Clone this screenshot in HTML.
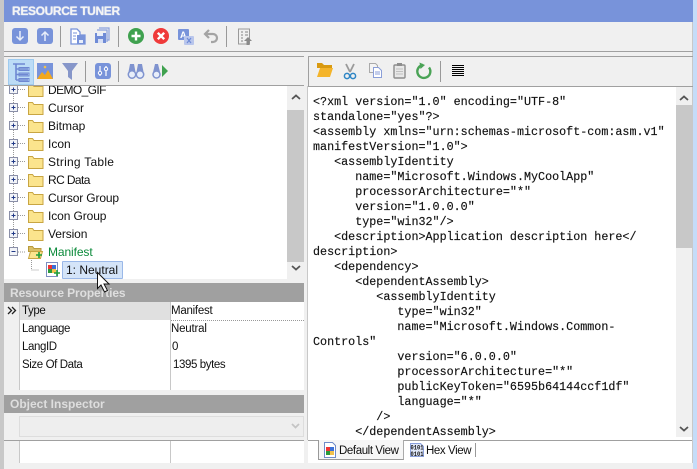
<!DOCTYPE html>
<html><head><meta charset="utf-8">
<style>
html,body{margin:0;padding:0}
body{width:697px;height:469px;overflow:hidden;position:relative;background:#f0f0f0;font-family:"Liberation Sans",sans-serif;font-size:12px;color:#111}
.a{position:absolute}
.t{position:absolute;white-space:pre;line-height:18px;font-size:12px}
.s{font-size:11.5px;letter-spacing:-.4px}
svg{position:absolute;overflow:visible}
.code{position:absolute;left:313px;top:95px;font:11.72px/15px "Liberation Mono",monospace;white-space:pre;color:#111;-webkit-text-stroke:.15px #111}
.hd{position:absolute;left:4px;width:300px;background:#a0a0a0;color:#dedede;font-weight:bold;font-size:12px;line-height:18px;text-indent:6px}
</style></head><body>
<div class="a" style="left:0;top:0;width:4px;height:469px;background:#c8c8c8"></div>
<div class="a" style="left:693px;top:0;width:4px;height:469px;background:#c5dcf8"></div>
<div class="a" style="left:692px;top:22px;width:1px;height:441px;background:#c8c8c8"></div>
<div class="a" style="left:4px;top:0;width:689px;height:22px;background:#7893da"></div>
<div class="t" style="left:12px;top:2px;color:#f4f4f4;font-weight:bold;font-size:12px;letter-spacing:-.35px;text-shadow:0 0 1px #fff">RESOURCE TUNER</div>

<div class="a" style="left:4px;top:51px;width:689px;height:1px;background:#a0a0a0"></div>
<div class="a" style="left:4px;top:56px;width:300px;height:1px;background:#a0a0a0"></div>
<div class="a" style="left:308px;top:56px;width:385px;height:1px;background:#a0a0a0"></div>
<div class="a" style="left:308px;top:56px;width:1px;height:30px;background:#a0a0a0"></div>
<div class="a" style="left:4px;top:85px;width:300px;height:1px;background:#a0a0a0"></div>
<div class="a" style="left:308px;top:86px;width:385px;height:1px;background:#a0a0a0"></div>
<div class="a" style="left:307px;top:86px;width:1px;height:354px;background:#c8c8c8"></div>

<!-- separators -->
<div class="a" style="left:60px;top:26px;width:1px;height:21px;background:#999"></div>
<div class="a" style="left:118px;top:26px;width:1px;height:21px;background:#999"></div>
<div class="a" style="left:226px;top:26px;width:1px;height:21px;background:#999"></div>
<div class="a" style="left:85px;top:61px;width:1px;height:21px;background:#999"></div>
<div class="a" style="left:118px;top:61px;width:1px;height:21px;background:#999"></div>
<div class="a" style="left:440px;top:61px;width:1px;height:21px;background:#999"></div>

<!-- top toolbar icons -->
<svg style="left:0;top:0" width="300" height="56">
<rect x="12" y="28" width="16" height="16" rx="3" fill="#7893da"/>
<path d="M20 31v9M16.500 36.500l3.500 3.500 3.500-3.500" stroke="#e8eefa" stroke-width="1.500" fill="none"/>
<rect x="37" y="28" width="16" height="16" rx="3" fill="#7893da"/>
<path d="M45 41v-9M41.500 35.500l3.500-3.500 3.500 3.500" stroke="#e8eefa" stroke-width="1.500" fill="none"/>
<path d="M71 29h6l3 3v3h5v9H71z" fill="#fff" stroke="#7893da" stroke-width="1.300"/>
<rect x="77" y="35" width="8" height="9" fill="#7893da"/>
<rect x="79" y="40" width="4" height="3" fill="#e8eefa"/>
<path d="M73 33h4M73 36h3M73 39h3" stroke="#7893da"/>
<path d="M99 28h10v12h-2" fill="none" stroke="#8aa0dc" stroke-width="1.200"/>
<path d="M97 30h10v12" fill="none" stroke="#8aa0dc" stroke-width="1.200"/>
<rect x="95" y="33" width="11" height="10" fill="#6f8bd6"/>
<rect x="97" y="33" width="6" height="3" fill="#e8eefa"/>
<rect x="98" y="39" width="5" height="4" fill="#d8e0f5"/>
<circle cx="136" cy="36" r="8" fill="#3fa14f"/>
<path d="M136 31.500v9M131.500 36h9" stroke="#fff" stroke-width="2.400"/>
<circle cx="161" cy="36" r="8" fill="#ef3a3a"/>
<path d="M157.800 32.800l6.400 6.400M164.200 32.800l-6.400 6.400" stroke="#fff" stroke-width="2.400"/>
<rect x="178" y="29" width="11" height="11" rx="1" fill="#7893da"/>
<text x="180" y="38" font-size="9" font-weight="bold" fill="#fff" font-family="Liberation Sans">A</text>
<rect x="184" y="36" width="10" height="9" rx="1" fill="#b9c6ec"/>
<path d="M187 38l4 5M191 38l-4 5" stroke="#6f8bd6" stroke-width="1.200"/>
<path d="M209 30l-4 4 4 4M205 34h8a4 4 0 0 1 4 4v0a4 4 0 0 1-4 4h-2" fill="none" stroke="#a4a4a4" stroke-width="2.200"/>
<rect x="238.500" y="29" width="11" height="15" fill="#f0f0f0" stroke="#9a9a9a"/>
<path d="M241 32h2M241 35h2M241 38h2M241 41h2M245 32h3M245 35h3" stroke="#999" stroke-width="1.200"/>
<path d="M248 37l4 4h-2.500v4h-3v-4H244z" fill="#8a8a8a"/>
</svg>

<!-- left toolbar icons -->
<div class="a" style="left:8px;top:59px;width:24px;height:24px;background:#bcdcf6;border:1px solid #9ecbef"></div>
<svg style="left:0;top:0" width="300" height="90">
<path d="M13 64h12M16 64v16M16 69h12M16 74.500h12M16 80h12" stroke="#6e88d2" stroke-width="1.600" fill="none"/>
<rect x="19" y="67.500" width="10" height="3" fill="none" stroke="#6e88d2"/>
<rect x="19" y="73" width="10" height="3" fill="none" stroke="#6e88d2"/>
<rect x="19" y="78.500" width="10" height="3" fill="none" stroke="#6e88d2"/>
<rect x="37" y="63" width="16" height="16" fill="#7893da"/>
<path d="M37 79l5-7 3 3 3-5 5 9z" fill="#f2a81d"/>
<circle cx="45" cy="67" r="1.300" fill="#f2c14d"/>
<path d="M62 63h16l-6 8v9l-4-3v-6z" fill="#8696c9"/>
<rect x="95" y="63" width="16" height="16" rx="3" fill="#7893da"/>
<path d="M100 66v10M106 66v10" stroke="#fff" stroke-width="1.200"/>
<circle cx="100" cy="73" r="1.700" fill="#7893da" stroke="#fff"/>
<circle cx="106" cy="69" r="1.700" fill="#7893da" stroke="#fff"/>
<path d="M130 64h4l1.500 8v2.500a3.800 3.800 0 0 1-7.500 0z" fill="#7f93cf"/>
<path d="M138 64h4l2 10.500a3.800 3.800 0 0 1-7.500 0V72z" fill="#7f93cf"/>
<circle cx="132" cy="74.500" r="3.700" fill="#e8eefa" stroke="#7f93cf" stroke-width="1.500"/>
<circle cx="140" cy="74.500" r="3.700" fill="#e8eefa" stroke="#7f93cf" stroke-width="1.500"/>
<path d="M155 64h3l2 8v2.500a3.800 3.800 0 0 1-7.500 0z" fill="#7f93cf"/>
<circle cx="156.500" cy="74.500" r="3.500" fill="#e8eefa" stroke="#7f93cf" stroke-width="1.500"/>
<path d="M162 65l6 6-6 6z" fill="#3fa14f"/>
</svg>

<!-- right toolbar icons -->
<svg style="left:0;top:0" width="697" height="90">
<path d="M317 63h5l2 2h8v3h-15z" fill="#d99a10"/>
<path d="M317 77l3-9h13l-3 9z" fill="#f4b42a"/>
<path d="M346 64l4 8M354 64l-4 8" stroke="#9a9a9a" stroke-width="1.800"/>
<circle cx="347" cy="76" r="2.600" fill="none" stroke="#2f86c5" stroke-width="1.500"/>
<circle cx="353" cy="76" r="2.600" fill="none" stroke="#2f86c5" stroke-width="1.500"/>
<path d="M369.500 63.500h6l2 2v7h-8z" fill="#f4f4f4" stroke="#aaa"/>
<path d="M373.500 67.500h5l3 3v7h-8z" fill="#fff" stroke="#8a9ed8"/>
<path d="M375 72h5M375 74h5" stroke="#8a9ed8"/>
<rect x="394" y="65" width="11" height="13" rx="1" fill="#e8e8e8" stroke="#8d8d8d" stroke-width="1.400"/>
<rect x="397" y="63" width="5" height="3" fill="#8d8d8d"/>
<path d="M396 69h7M396 71.500h7M396 74h7" stroke="#c0c0c0"/>
<path d="M423 65a6.500 6.500 0 1 0 6 2.500" fill="none" stroke="#4aa356" stroke-width="2.400"/>
<path d="M419.500 62.500l5.500 2.500-4.500 4z" fill="#4aa356"/>
<path d="M452 65.500h12M452 67.500h12M452 69.500h12M452 71.500h12M452 73.500h12M452 75.500h12" stroke="#000" stroke-width="1"/>
</svg>

<!-- Tree -->
<div class="a" style="left:4px;top:86px;width:300px;height:193px;background:#fff;overflow:hidden" id="tree">
<div class="a" style="left:283px;top:0;width:17px;height:193px;background:#f0f0f0"></div>
<div class="a" style="left:283px;top:24px;width:17px;height:152px;background:#c8c8c8"></div>
<svg style="left:0;top:0" width="300" height="193">
<path d="M9.500 4v158M9.500 166v4" stroke="#999" stroke-dasharray="1 1" fill="none"/>
<path d="M14 166h8M27.500 170v14h8" stroke="#999" stroke-dasharray="1 1" fill="none"/>
<path d="M288 13l4-3.500 4 3.500M288 180l4 3.500 4-3.500" stroke="#555" stroke-width="1.800" fill="none"/>
<g id="rows">
<g transform="translate(0,4)"><rect x="5.500" y="-4.500" width="8" height="8" fill="#f2f4f8" stroke="#8a8fa8"/><path d="M7.500-.5h4M9.500-2.500v4" stroke="#223a88"/><path d="M14-.5h8" stroke="#999" stroke-dasharray="1 1"/><path d="M24.500-5.500h4l1.500 2h9v10h-14.500z" fill="#fbe48d" stroke="#c8a542"/></g>
<g transform="translate(0,22)"><rect x="5.500" y="-4.500" width="8" height="8" fill="#f2f4f8" stroke="#8a8fa8"/><path d="M7.500-.5h4M9.500-2.500v4" stroke="#223a88"/><path d="M14-.5h8" stroke="#999" stroke-dasharray="1 1"/><path d="M24.500-5.500h4l1.500 2h9v10h-14.500z" fill="#fbe48d" stroke="#c8a542"/></g>
<g transform="translate(0,40)"><rect x="5.500" y="-4.500" width="8" height="8" fill="#f2f4f8" stroke="#8a8fa8"/><path d="M7.500-.5h4M9.500-2.500v4" stroke="#223a88"/><path d="M14-.5h8" stroke="#999" stroke-dasharray="1 1"/><path d="M24.500-5.500h4l1.500 2h9v10h-14.500z" fill="#fbe48d" stroke="#c8a542"/></g>
<g transform="translate(0,58)"><rect x="5.500" y="-4.500" width="8" height="8" fill="#f2f4f8" stroke="#8a8fa8"/><path d="M7.500-.5h4M9.500-2.500v4" stroke="#223a88"/><path d="M14-.5h8" stroke="#999" stroke-dasharray="1 1"/><path d="M24.500-5.500h4l1.500 2h9v10h-14.500z" fill="#fbe48d" stroke="#c8a542"/></g>
<g transform="translate(0,76)"><rect x="5.500" y="-4.500" width="8" height="8" fill="#f2f4f8" stroke="#8a8fa8"/><path d="M7.500-.5h4M9.500-2.500v4" stroke="#223a88"/><path d="M14-.5h8" stroke="#999" stroke-dasharray="1 1"/><path d="M24.500-5.500h4l1.500 2h9v10h-14.500z" fill="#fbe48d" stroke="#c8a542"/></g>
<g transform="translate(0,94)"><rect x="5.500" y="-4.500" width="8" height="8" fill="#f2f4f8" stroke="#8a8fa8"/><path d="M7.500-.5h4M9.500-2.500v4" stroke="#223a88"/><path d="M14-.5h8" stroke="#999" stroke-dasharray="1 1"/><path d="M24.500-5.500h4l1.500 2h9v10h-14.500z" fill="#fbe48d" stroke="#c8a542"/></g>
<g transform="translate(0,112)"><rect x="5.500" y="-4.500" width="8" height="8" fill="#f2f4f8" stroke="#8a8fa8"/><path d="M7.500-.5h4M9.500-2.500v4" stroke="#223a88"/><path d="M14-.5h8" stroke="#999" stroke-dasharray="1 1"/><path d="M24.500-5.500h4l1.500 2h9v10h-14.500z" fill="#fbe48d" stroke="#c8a542"/></g>
<g transform="translate(0,130)"><rect x="5.500" y="-4.500" width="8" height="8" fill="#f2f4f8" stroke="#8a8fa8"/><path d="M7.500-.5h4M9.500-2.500v4" stroke="#223a88"/><path d="M14-.5h8" stroke="#999" stroke-dasharray="1 1"/><path d="M24.500-5.500h4l1.500 2h9v10h-14.500z" fill="#fbe48d" stroke="#c8a542"/></g>
<g transform="translate(0,148)"><rect x="5.500" y="-4.500" width="8" height="8" fill="#f2f4f8" stroke="#8a8fa8"/><path d="M7.500-.5h4M9.500-2.500v4" stroke="#223a88"/><path d="M14-.5h8" stroke="#999" stroke-dasharray="1 1"/><path d="M24.500-5.500h4l1.500 2h9v10h-14.500z" fill="#fbe48d" stroke="#c8a542"/></g>
</g>
<rect x="5.500" y="161.500" width="8" height="8" fill="#f2f4f8" stroke="#8a8fa8"/><path d="M7.500 165.500h4" stroke="#223a88"/>
<path d="M24.500 160.500h4l1.500 2h7v3h-12.500z" fill="#d9bf66" stroke="#b89a3c"/>
<path d="M24.500 172.500l2-7h12l-2 7z" fill="#fbe48d" stroke="#c8a542"/>
<path d="M32 169h6M35 166v6" stroke="#1f9e3a" stroke-width="1.600"/>
</svg>
<div class="t" style="left:44px;top:-5px;letter-spacing:-.6px">DEMO_GIF</div>
<div class="t" style="left:44px;top:13px">Cursor</div>
<div class="t" style="left:44px;top:31px">Bitmap</div>
<div class="t" style="left:44px;top:49px">Icon</div>
<div class="t" style="left:44px;top:67px;letter-spacing:.25px">String Table</div>
<div class="t" style="left:44px;top:85px;letter-spacing:-.6px">RC Data</div>
<div class="t" style="left:44px;top:103px;letter-spacing:-.15px">Cursor Group</div>
<div class="t" style="left:44px;top:121px;letter-spacing:-.1px">Icon Group</div>
<div class="t" style="left:44px;top:139px;letter-spacing:-.1px">Version</div>
<div class="t" style="left:44px;top:157px;color:#0b8a3a;letter-spacing:-.1px">Manifest</div>
<div class="a" style="left:58px;top:175px;width:59px;height:16px;background:#d4e4f8;border:1px solid #9ab8e8;border-radius:1px"></div>
<div class="t" style="left:62px;top:175px">1: Neutral</div>
<svg style="left:0;top:0" width="300" height="193">
<rect x="42.500" y="176.500" width="11" height="14" fill="#fff" stroke="#7d8fc0"/>
<rect x="44" y="179" width="4" height="4" fill="#e33"/><rect x="48" y="179" width="4" height="4" fill="#3a6fd8"/><rect x="44" y="183" width="4" height="4" fill="#2a9a3a"/><rect x="48" y="183" width="4" height="4" fill="#f2c14d"/>
<path d="M53 184v6M50 187h6" stroke="#1f9e3a" stroke-width="1.600"/>
</svg>
</div>

<!-- Resource properties -->
<div class="hd" style="top:283px;height:19px;line-height:20px;letter-spacing:-.1px">Resource Properties</div>
<div class="a" style="left:4px;top:302px;width:300px;height:88px;background:#fff"></div>
<div class="a" style="left:4px;top:302px;width:15px;height:88px;background:#f0f0f0"></div>
<div class="a" style="left:19px;top:302px;width:1px;height:88px;background:#c8c8c8"></div>
<div class="a" style="left:20px;top:302px;width:150px;height:18px;background:#e0e0e0"></div>
<div class="a" style="left:170px;top:302px;width:1px;height:88px;background:#c8c8c8"></div>
<div class="a" style="left:171px;top:320px;width:133px;height:0;border-top:1px dotted #999"></div>
<svg style="left:0;top:0" width="30" height="320"><path d="M8 307l3.500 3.500L8 314M12 307l3.500 3.500L12 314" stroke="#222" stroke-width="1.300" fill="none"/></svg>
<div class="t s" style="left:22px;top:302px">Type</div>
<div class="t s" style="left:171px;top:302px;letter-spacing:-.25px">Manifest</div>
<div class="t s" style="left:22px;top:320px">Language</div>
<div class="t s" style="left:171px;top:320px;letter-spacing:-.2px">Neutral</div>
<div class="t s" style="left:22px;top:338px">LangID</div>
<div class="t s" style="left:172px;top:338px">0</div>
<div class="t s" style="left:22px;top:356px">Size Of Data</div>
<div class="t s" style="left:173px;top:356px">1395 bytes</div>

<!-- Object inspector -->
<div class="hd" style="top:395px;height:18px">Object Inspector</div>
<div class="a" style="left:19px;top:416px;width:283px;height:19px;background:#eee;border:1px solid #ddd"></div>
<svg style="left:0;top:0" width="310" height="440"><path d="M292 424l3.500 3.500 3.500-3.500" stroke="#c4c4c4" stroke-width="1.800" fill="none"/></svg>
<div class="a" style="left:4px;top:440px;width:300px;height:1px;background:#a0a0a0"></div>
<div class="a" style="left:4px;top:441px;width:300px;height:22px;background:#fff"></div>
<div class="a" style="left:4px;top:441px;width:15px;height:22px;background:#f0f0f0"></div>
<div class="a" style="left:19px;top:441px;width:1px;height:22px;background:#c8c8c8"></div>
<div class="a" style="left:170px;top:441px;width:1px;height:22px;background:#c8c8c8"></div>

<!-- Code pane -->
<div class="a" style="left:308px;top:87px;width:384px;height:353px;background:#fff;overflow:hidden">
<div class="a" style="left:368px;top:0;width:16px;height:350px;background:#f0f0f0"></div>
<div class="a" style="left:368px;top:18px;width:16px;height:143px;background:#c8c8c8"></div>
</div>
<svg style="left:0;top:0" width="697" height="469"><path d="M680 100l4-3.500 4 3.500M680 427l4 3.500 4-3.500" stroke="#555" stroke-width="1.800" fill="none"/></svg>
<div class="code">&lt;?xml version="1.0" encoding="UTF-8"
standalone="yes"?&gt;
&lt;assembly xmlns="urn:schemas-microsoft-com:asm.v1"
manifestVersion="1.0"&gt;
   &lt;assemblyIdentity
      name="Microsoft.Windows.MyCoolApp"
      processorArchitecture="*"
      version="1.0.0.0"
      type="win32"/&gt;
   &lt;description&gt;Application description here&lt;/
description&gt;
   &lt;dependency&gt;
      &lt;dependentAssembly&gt;
         &lt;assemblyIdentity
            type="win32"
            name="Microsoft.Windows.Common-
Controls"
            version="6.0.0.0"
            processorArchitecture="*"
            publicKeyToken="6595b64144ccf1df"
            language="*"
         /&gt;
      &lt;/dependentAssembly&gt;</div>

<!-- Tabs -->
<div class="a" style="left:308px;top:440px;width:384px;height:23px;background:#fff"></div>
<div class="a" style="left:308px;top:440px;width:10px;height:1px;background:#a0a0a0"></div>
<div class="a" style="left:403px;top:440px;width:289px;height:1px;background:#a0a0a0"></div>
<div class="a" style="left:318px;top:440px;width:86px;height:20px;background:#f6f6f6;border-left:1px solid #999;border-bottom:1px solid #999;border-right:1px solid #aaa;box-sizing:border-box"></div>
<div class="a" style="left:475px;top:443px;width:1px;height:14px;background:#999"></div>
<svg style="left:0;top:0" width="697" height="469">
<path d="M324.500 442.500h8l3 3v12h-11z" fill="#fff" stroke="#6f8bc8"/>
<rect x="326" y="447" width="4" height="4" fill="#e33"/><rect x="330" y="447" width="4" height="4" fill="#3a6fd8"/><rect x="326" y="451" width="4" height="4" fill="#2a9a3a"/><rect x="330" y="451" width="4" height="4" fill="#f2c14d"/>
<path d="M410.500 443.500h10l3 3v10h-13z" fill="#dfe7f8" stroke="#8aa0dc"/>
<text x="410.500" y="449.500" font-size="6" font-weight="bold" fill="#111" font-family="Liberation Mono" textLength="13" lengthAdjust="spacingAndGlyphs">0101</text>
<text x="410.500" y="456" font-size="6" font-weight="bold" fill="#111" font-family="Liberation Mono" textLength="13" lengthAdjust="spacingAndGlyphs">0101</text>
</svg>
<div class="t s" style="left:339px;top:442px">Default View</div>
<div class="t s" style="left:426px;top:442px">Hex View</div>

<!-- Cursor -->
<svg style="left:0;top:0" width="130" height="300">
<path d="M97.500 272.500v16l3.500-3.500 3.500 7 3-1.500-3.500-6.500h5z" fill="#fff" stroke="#111" stroke-width="1"/>
</svg>
</body></html>
